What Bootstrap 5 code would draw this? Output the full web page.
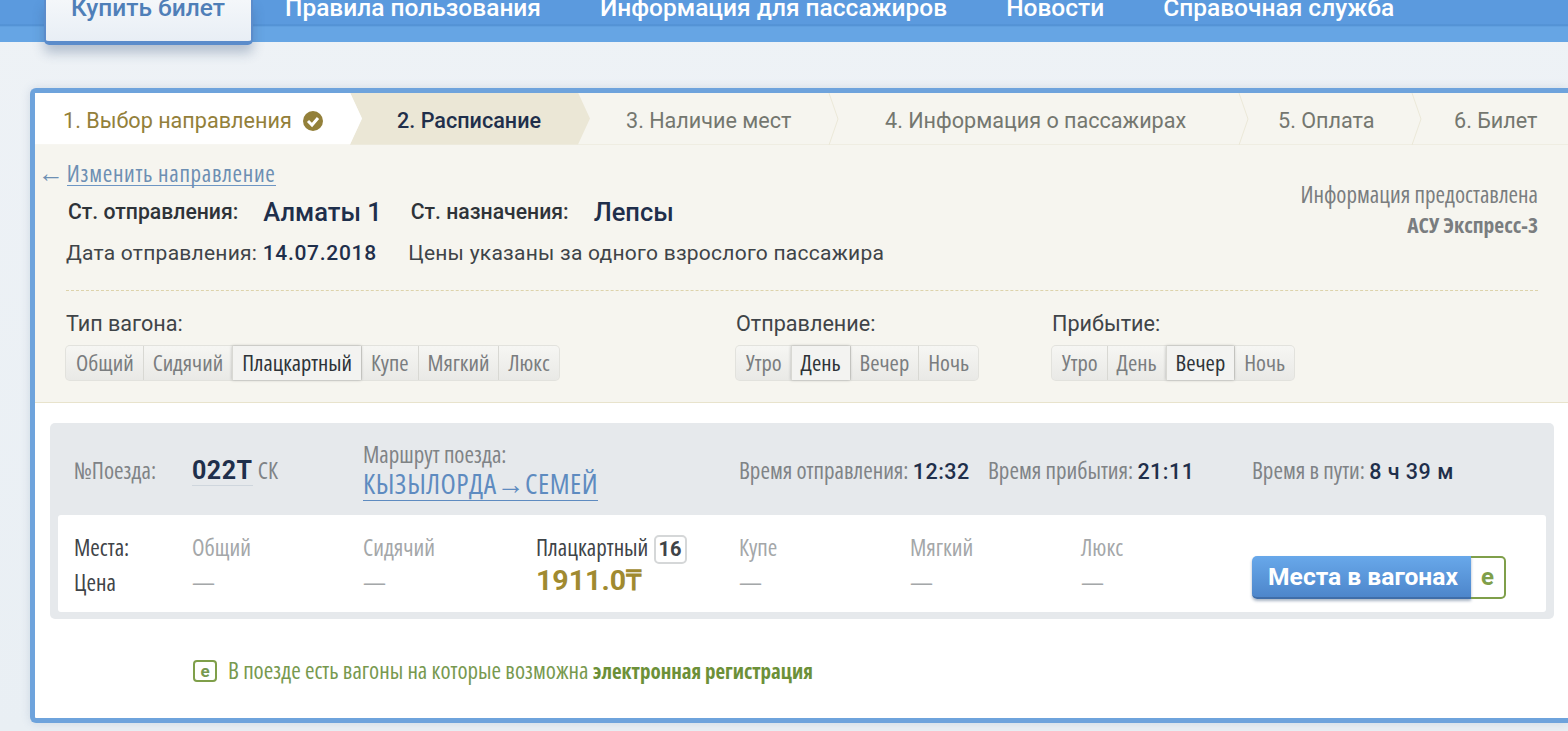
<!DOCTYPE html>
<html lang="ru">
<head>
  <meta charset="UTF-8">
  <title>Купить билет</title>
  <link href="https://cdn.jsdelivr.net/npm/bootstrap@5.3.3/dist/css/bootstrap.min.css" rel="stylesheet">
  <style>
    html, body { height: 731px; overflow: hidden; }
    body { background: linear-gradient(#eef2f6, #e9eff4); font-family: "Roboto", "Liberation Sans", sans-serif; color: #3f4448; font-size: 21px; line-height: 1.2; }
    .narrowtxt { font-family: "Open Sans", "Roboto", sans-serif; font-stretch: 75%; }
    .widetxt { font-family: "Roboto", sans-serif; font-stretch: 100%; }

    /* top menu */
    .topbar { height: 42px; background: linear-gradient(#5b9ade 0, #5b9ade 24px, #4e8dd0 25px, #66a5e4 27px, #66a5e4 100%); }
    .topmenu { height: 42px; padding-left: 44px; gap: 59px; }
    .topitem { color: #fff; font-size: 24.5px; font-weight: 500; line-height: 1; text-decoration: none; margin-top: -4px; white-space: nowrap; }
    .topitem-active { color: #4f7fb8; width: 209px; height: 45px; margin-top: 0; margin-right: -27px; padding-left: 25px; background: linear-gradient(#f4f7fa, #e8eef5); border: solid #5b8ccb; border-width: 0 2px 4px 2px; border-radius: 0 0 5px 5px; box-shadow: 0 8px 12px rgba(50, 80, 120, .3); }
    .topitem-active span { position: relative; top: -4px; }

    /* main panel */
    .mainpanel { margin: 46px 0 0 30px; height: 635px; background: #fff; border: 5px solid #6ea3dc; border-right: 0; border-radius: 6px 0 0 6px; box-shadow: 0 0 10px rgba(90, 120, 160, .2); }

    /* steps */
    .steps { height: 52px; background: #f6f5ef; border-bottom: 1px solid #efede2; color: #74776f; font-size: 21.6px; }
    .stepitem { height: 52px; flex: none; white-space: nowrap; padding-top: 4px; }
    .step-done { width: 327px; background: #fff; color: #93803a; padding-left: 28px; clip-path: polygon(0 0, 315px 0, 327px 50%, 315px 100%, 0 100%); margin-right: -12px; z-index: 1; }
    .step-now { width: 240px; background: #ebe7d6; color: #1f2f4b; font-weight: 500; padding-left: 47px; clip-path: polygon(0 0, 228px 0, 240px 50%, 228px 100%, 0 100%, 12px 50%); }
    .step-three { width: 238px; padding-left: 36px; }
    .step-four { width: 398px; padding-left: 45px; }
    .step-five { width: 161px; padding-left: 28px; }
    .step-six { padding-left: 31px; }
    .step-sep { width: 12px; height: 52px; flex: none; }
    .checkmark { width: 22px; height: 22px; margin-left: 10px; }

    /* filters */
    .filterbox { height: 258px; background: #f6f5ef; border-bottom: 1px solid #e8e3cc; position: relative; padding: 14px 30px 0 31px; }
    .backlink { margin-left: -28px; font-size: 26px; line-height: 26px; color: #6d8fb3; white-space: nowrap; }
    .backlink a { color: #6d8fb3; text-decoration: none; border-bottom: 1px solid #6d96c4; font-size: 23px; letter-spacing: .7px; line-height: 24px; display: inline-block; margin-left: -2px; }
    .stationrow { height: 40px; margin-top: 6px; padding-left: 2px; }
    .stationlabel { color: #2e3338; font-weight: 500; font-size: 21.2px; }
    .stationname { color: #1f2f4b; font-weight: 500; font-size: 25.5px; margin-left: 25px; margin-right: 29px; }
    .daterow { color: #3f4448; margin-top: 9px; letter-spacing: .25px; }
    .daterow b { color: #1f2f4b; font-weight: 500; letter-spacing: .7px; }
    .pricenote { margin-left: 26px; }
    .infosource { position: absolute; right: 30px; top: 34px; text-align: right; color: #7a7d7f; font-size: 23px; line-height: 30px; }
    .infosource b { font-size: 21.5px; }
    .dashline { border-top: 1px dashed #ddd3ab; margin: 24px 0 20px; }
    .filtergroup { flex: none; }
    .grouplabel { color: #3f4448; margin-bottom: 9px; font-size: 21.6px; }
    .seg-one { width: 670px; }
    .seg-two { width: 316px; }
    .segbtns { height: 34px; background: #e6e6e2; border-radius: 4px; box-shadow: 0 0 0 1px #e2e2dd; }
    .segbtn { padding: 0 9px; line-height: 33px; font-size: 22.5px; color: #7a7d7f; background: linear-gradient(#f6f6f3, #e9e9e6); border-left: 1px solid #d8d8d3; white-space: nowrap; }
    .segbtn:first-child { border-left: 0; border-radius: 4px 0 0 4px; padding-left: 10px; }
    .segbtn:last-child { border-radius: 0 4px 4px 0; }
    .segbtn-on { color: #2e3338; background: #f3f3f1; box-shadow: 0 0 3px rgba(0, 0, 0, .25); position: relative; }

    /* train */
    .traincard { margin: 20px 14px 0 15px; height: 196px; background: #e6e9ec; border-radius: 5px; padding: 0 8px 7px; }
    .trainhead { height: 92px; padding-top: 4px; }
    .head-num { width: 134px; padding-left: 16px; flex: none; }
    .head-code { width: 171px; flex: none; }
    .head-route { width: 376px; flex: none; }
    .head-dep { width: 249px; flex: none; }
    .head-arr { width: 264px; flex: none; }
    .muted-label { color: #7f8386; font-size: 23px; }
    .trainnum { color: #1f2f4b; font-weight: 700; font-size: 25px; border-bottom: 1px solid #cfd6dd; letter-spacing: .5px; }
    .trainhead b { color: #1f2f4b; font-weight: 500; letter-spacing: .5px; font-size: 21.5px; }
    .routelink { color: #5e8bc0; text-decoration: none; border-bottom: 1px solid #5e8bc0; font-size: 28px; letter-spacing: .5px; line-height: 31px; display: inline-block; }
    .routearrow { font-family: "Liberation Sans", sans-serif; font-stretch: 100%; }
    .seatrow { height: 97px; background: #fff; border-radius: 3px; display: grid; grid-template-columns: 134px 171px 173px 203px 171px 171px 171px auto; padding-top: 15px; }
    .seatlabels { padding-left: 16px; color: #3f4448; font-size: 23px; line-height: 35px; }
    .seatcol { color: #a4a7a9; font-size: 23px; line-height: 35px; }
    .seatcol-on { color: #3f4448; }
    .seatcount { display: inline-block; border: 2px solid #d5d7d8; border-radius: 5px; font-weight: 700; font-size: 20px; line-height: 25px; padding: 0 3px; margin-left: 1px; }
    .seatprice { color: #a08a30; font-weight: 700; font-size: 28.5px; line-height: 32px; }
    .btnwagons { height: 43px; margin-top: 26px; width: 254px; }
    .btnwagons-main { width: 219px; background: linear-gradient(#68a8ea, #4d86cb); color: #fff; font-weight: 700; font-size: 24.6px; padding-left: 3px; border-bottom: 2px solid #3f6da8; border-radius: 5px 0 0 5px; box-shadow: 0 2px 3px rgba(40, 70, 110, .4); }
    .btnwagons-e { width: 35px; border: 2px solid #7f9f4a; border-left: 0; border-radius: 0 5px 5px 0; color: #7f9f4a; font-weight: 700; font-size: 24px; }

    /* legend */
    .legendrow { margin: 38px 0 0 158px; color: #77994f; font-size: 23px; }
    .legendrow b { font-weight: 700; color: #6c9038; font-size: 21px; }
    .legendmark { width: 24px; height: 22px; border: 2px solid #7f9f4a; border-radius: 4px; font-size: 17px; font-weight: 700; line-height: 16px; margin-right: 11px; }
  </style>
</head>
<body>

  <!-- Верхнее меню -->
  <div class="topbar">
    <div class="topmenu d-flex align-items-start">
      <a class="topitem topitem-active" href="#"><span>Купить билет</span></a>
      <a class="topitem" href="#">Правила пользования</a>
      <a class="topitem" href="#">Информация для пассажиров</a>
      <a class="topitem" href="#">Новости</a>
      <a class="topitem" href="#">Справочная служба</a>
    </div>
  </div>

  <div class="mainpanel">

    <!-- Шаги -->
    <div class="steps d-flex align-items-center">
      <div class="stepitem step-done d-flex align-items-center">1. Выбор направления
        <svg class="checkmark" viewBox="0 0 22 22"><circle cx="11" cy="11" r="10" fill="#93803a"/><path d="M6 11l4 4 6-7" fill="none" stroke="#fff" stroke-width="3"/></svg>
      </div>
      <div class="stepitem step-now d-flex align-items-center">2. Расписание</div>
      <div class="stepitem step-three d-flex align-items-center">3. Наличие мест</div>
      <svg class="step-sep" viewBox="0 0 12 52"><path d="M1 0l9 26-9 26" fill="none" stroke="#ebe8d8"/></svg>
      <div class="stepitem step-four d-flex align-items-center">4. Информация о пассажирах</div>
      <svg class="step-sep" viewBox="0 0 12 52"><path d="M1 0l9 26-9 26" fill="none" stroke="#ebe8d8"/></svg>
      <div class="stepitem step-five d-flex align-items-center">5. Оплата</div>
      <svg class="step-sep" viewBox="0 0 12 52"><path d="M1 0l9 26-9 26" fill="none" stroke="#ebe8d8"/></svg>
      <div class="stepitem step-six d-flex align-items-center">6. Билет</div>
    </div>

    <!-- Направление и фильтры -->
    <div class="filterbox">
      <div class="backlink narrowtxt">← <a href="#">Изменить направление</a></div>
      <div class="stationrow d-flex align-items-center">
        <span class="stationlabel">Ст. отправления:</span>
        <span class="stationname">Алматы 1</span>
        <span class="stationlabel">Ст. назначения:</span>
        <span class="stationname">Лепсы</span>
      </div>
      <div class="daterow">Дата отправления: <b>14.07.2018</b> <span class="pricenote">Цены указаны за одного взрослого пассажира</span></div>
      <div class="infosource narrowtxt">Информация предоставлена<br><b>АСУ Экспресс-3</b></div>
      <div class="dashline"></div>
      <div class="d-flex">
        <div class="filtergroup seg-one">
          <div class="grouplabel">Тип вагона:</div>
          <div class="segbtns d-inline-flex narrowtxt">
            <span class="segbtn">Общий</span><span class="segbtn">Сидячий</span><span class="segbtn segbtn-on">Плацкартный</span><span class="segbtn">Купе</span><span class="segbtn">Мягкий</span><span class="segbtn">Люкс</span>
          </div>
        </div>
        <div class="filtergroup seg-two">
          <div class="grouplabel">Отправление:</div>
          <div class="segbtns d-inline-flex narrowtxt">
            <span class="segbtn">Утро</span><span class="segbtn segbtn-on">День</span><span class="segbtn">Вечер</span><span class="segbtn">Ночь</span>
          </div>
        </div>
        <div class="filtergroup">
          <div class="grouplabel">Прибытие:</div>
          <div class="segbtns d-inline-flex narrowtxt">
            <span class="segbtn">Утро</span><span class="segbtn">День</span><span class="segbtn segbtn-on">Вечер</span><span class="segbtn">Ночь</span>
          </div>
        </div>
      </div>
    </div>

    <!-- Поезд -->
    <div class="traincard">
      <div class="trainhead d-flex align-items-center">
        <div class="head-num muted-label narrowtxt">№Поезда:</div>
        <div class="head-code"><span class="trainnum">022Т</span> <span class="muted-label narrowtxt">СК</span></div>
        <div class="head-route narrowtxt">
          <div class="muted-label">Маршрут поезда:</div>
          <a class="routelink" href="#">КЫЗЫЛОРДА<span class="routearrow">→</span>СЕМЕЙ</a>
        </div>
        <div class="head-dep muted-label narrowtxt">Время отправления: <b class="widetxt">12:32</b></div>
        <div class="head-arr muted-label narrowtxt">Время прибытия: <b class="widetxt">21:11</b></div>
        <div class="muted-label narrowtxt">Время в пути: <b class="widetxt">8 ч 39 м</b></div>
      </div>
      <div class="seatrow">
        <div class="seatlabels narrowtxt">Места:<br>Цена</div>
        <div class="seatcol narrowtxt">Общий<br>—</div>
        <div class="seatcol narrowtxt">Сидячий<br>—</div>
        <div class="seatcol seatcol-on narrowtxt">Плацкартный <span class="seatcount widetxt">16</span><div class="seatprice widetxt">1911.0₸</div></div>
        <div class="seatcol narrowtxt">Купе<br>—</div>
        <div class="seatcol narrowtxt">Мягкий<br>—</div>
        <div class="seatcol narrowtxt">Люкс<br>—</div>
        <div class="btnwagons d-flex">
          <div class="btnwagons-main d-flex align-items-center justify-content-center">Места в вагонах</div>
          <div class="btnwagons-e d-flex align-items-center justify-content-center">e</div>
        </div>
      </div>
    </div>

    <div class="legendrow d-flex align-items-center">
      <span class="legendmark d-flex align-items-center justify-content-center">e</span>
      <span class="narrowtxt">В поезде есть вагоны на которые возможна <b>электронная регистрация</b></span>
    </div>
  </div>

  <script src="https://cdn.jsdelivr.net/npm/bootstrap@5.3.3/dist/js/bootstrap.bundle.min.js"></script>
</body>
</html>
